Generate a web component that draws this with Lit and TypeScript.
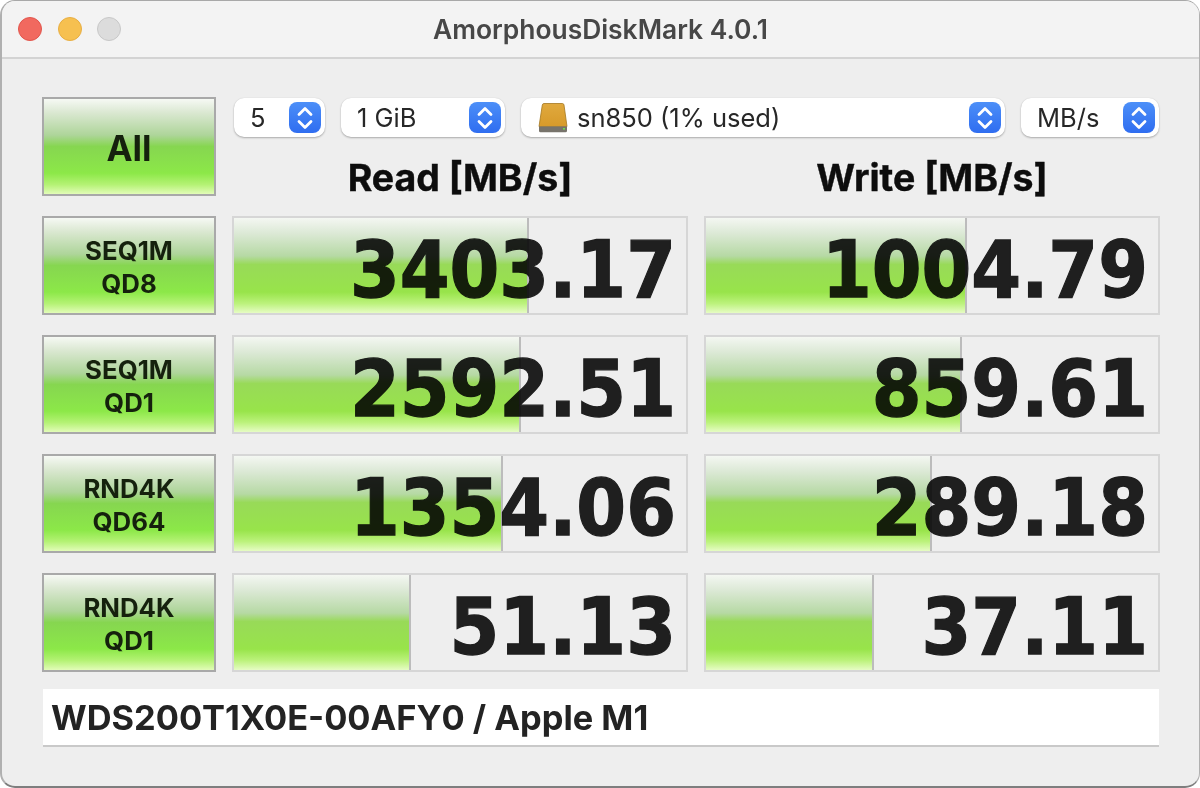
import { LitElement, html, css, svg } from "lit";
import { customElement } from "lit/decorators.js";

const ROWS = [
  { l1: "SEQ1M", l2: "QD8", read: "3403.17", rw: 297, write: "1004.79", ww: 263 },
  { l1: "SEQ1M", l2: "QD1", read: "2592.51", rw: 289, write: "859.61", ww: 258 },
  { l1: "RND4K", l2: "QD64", read: "1354.06", rw: 271, write: "289.18", ww: 228 },
  { l1: "RND4K", l2: "QD1", read: "51.13", rw: 179, write: "37.11", ww: 170 },
];

const chevrons = svg`<svg class="chev" viewBox="0 0 32 32" width="32" height="32" fill="none" stroke="#fff" stroke-width="2.8" stroke-linecap="round" stroke-linejoin="round"><path d="M10 12.5 16 6.5l6 6"/><path d="M10 19.5l6 6 6-6"/></svg>`;

const drive = svg`<svg class="drive" viewBox="0 0 30 32" width="30" height="32">
  <defs><linearGradient id="gold" x1="0" y1="0" x2="0" y2="1"><stop offset="0" stop-color="#e0a93e"/><stop offset="1" stop-color="#d79a2a"/></linearGradient></defs>
  <path d="M6 1.5h18.5q1.2 0 1.5 1.5L29 24.5H1L4.3 3Q4.6 1.5 6 1.5z" fill="url(#gold)" stroke="#a5771f" stroke-width=".8"/>
  <path d="M1 24.5h28v4.2q0 1.5-1.5 1.5h-25q-1.5 0-1.5-1.5z" fill="#77736b"/>
  <rect x="25" y="26" width="2" height="1.6" fill="#6fe04a"/>
</svg>`;

@customElement("app-root")
export class AppRoot extends LitElement {
  static styles = css`
    :host { display: block; width: 1200px; height: 788px; background: #fff; overflow: hidden; }
    * { box-sizing: border-box; }
    .win {
      width: 1200px; height: 788px; border-radius: 15px; overflow: hidden;
      border: 1px solid #a8a8a8; border-left: 2px solid #b0b0b0; border-right-color: #b0b0b0; border-bottom: 2px solid #7e7e7e;
      background: #eeeeee; display: flex; flex-direction: column;
      font-family: Inter, "Liberation Sans", Arial, sans-serif; filter: blur(0.4px);
    }
    .title {
      height: 58px; flex: none; background: #f3f3f3; border-bottom: 2px solid #d3d3d3;
      display: grid; grid-template-columns: 1fr auto 1fr; align-items: center;
    }
    .lights { display: flex; gap: 15.5px; padding-left: 16px; }
    .light { width: 24px; height: 24px; border-radius: 50%; border: 1px solid; }
    .r { background: #f1695f; border-color: #e2554c; }
    .y { background: #f6c050; border-color: #e8ae42; }
    .g { background: #dcdcdc; border-color: #c8c8c8; }
    .name { font: 600 26.4px Inter, "Liberation Sans", sans-serif; color: #474747; }
    .body {
      padding: 38px 39px 0 40px;
      display: grid; grid-template-columns: 174px 456px 456px; grid-auto-rows: 99px; column-gap: 16px; row-gap: 20px;
    }
    .btn {
      border: 2px solid #a9a9a9; color: #15210d; font-weight: 700; font-size: 25.8px; line-height: 33px;
      display: flex; flex-direction: column; align-items: center; justify-content: center; text-align: center;
      padding-top: 2px;
      background: linear-gradient(#f6f9f4 0%, #dbe8d2 14%, #aed59a 38%, #86d650 50%, #8ce848 78%, #b4f274 90%, #e2fcb8 100%);
    }
    .all { font-size: 35px; padding-top: 3px; }
    .top { grid-column: 2 / 4; display: flex; flex-direction: column; }
    .selects { display: flex; gap: 16px; height: 40px; margin-top: 1px; padding-left: 2px; }
    .sel {
      flex: none; height: 39px; background: #fff; border-radius: 10px;
      box-shadow: 0 1px 2px rgba(0,0,0,.28), 0 0 1px rgba(0,0,0,.12);
      display: flex; align-items: center; padding: 0 4px 0 16px;
      font: 400 25.5px Inter, "Liberation Sans", sans-serif; color: #272727;
    }
    .sel .val { flex: 1; display: flex; align-items: center; gap: 9px; white-space: nowrap; }
    .arrow { width: 32px; height: 31px; border-radius: 8px; background: linear-gradient(#4c8ff8, #2f6df0); display: flex; align-items: center; justify-content: center; }
    .chev { display: block; }
    .drive { display: block; margin-left: 1px; }
    .heads { display: grid; grid-template-columns: 456px 456px; column-gap: 16px; margin-top: 19px; }
    .head { text-align: center; font-weight: 700; font-size: 37.5px; line-height: 44px; color: #0d0d0d; -webkit-text-stroke: 0.4px #0d0d0d; }
    .cell { border: 2px solid #d6d6d6; background: #eeeeee; display: grid; }
    .fill, .num { grid-area: 1 / 1; }
    .fill {
      height: 100%; border-right: 2px solid #bcbcbc; justify-self: start;
      background: linear-gradient(#f4f7f2 0%, #dce9d6 16%, #b6d9a4 40%, #98da58 49%, #98e44a 78%, #bcf27c 90%, #e6fcc4 100%);
    }
    .num {
      justify-self: end; align-self: center; padding: 9px 10px 0 0;
      font: 700 71.6px/1 "DejaVu Sans", Verdana, sans-serif; color: #212121;
      -webkit-text-stroke: 1.2px #212121; mix-blend-mode: multiply;
      transform: scaleY(1.1); transform-origin: center;
    }
    .info {
      grid-column: 1 / 4; margin: -3px 0 0 1px; width: 1116px; height: 58px; background: #fff; border-bottom: 2px solid #c9c9c9;
      display: flex; align-items: center; padding-left: 8px;
      font-weight: 700; font-size: 34.4px; color: #232323;
    }
  `;

  private sel(width: number, content: unknown) {
    return html`<div class="sel" style="width:${width}px"><div class="val">${content}</div><div class="arrow">${chevrons}</div></div>`;
  }

  render() {
    return html`<div class="win">
      <div class="title">
        <div class="lights"><div class="light r"></div><div class="light y"></div><div class="light g"></div></div>
        <div class="name">AmorphousDiskMark 4.0.1</div>
        <div></div>
      </div>
      <div class="body">
        <div class="btn all">All</div>
        <div class="top">
          <div class="selects">
            ${this.sel(91, "5")}
            ${this.sel(164, "1 GiB")}
            ${this.sel(484, html`${drive}<span>sn850 (1% used)</span>`)}
            ${this.sel(138, "MB/s")}
          </div>
          <div class="heads"><div class="head">Read [MB/s]</div><div class="head">Write [MB/s]</div></div>
        </div>
        ${ROWS.map(r => html`
          <div class="btn"><span>${r.l1}</span><span>${r.l2}</span></div>
          <div class="cell"><div class="fill" style="width:${r.rw - 2}px"></div><div class="num">${r.read}</div></div>
          <div class="cell"><div class="fill" style="width:${r.ww - 2}px"></div><div class="num">${r.write}</div></div>
        `)}
        <div class="info">WDS200T1X0E-00AFY0 / Apple M1</div>
      </div>
    </div>`;
  }
}
